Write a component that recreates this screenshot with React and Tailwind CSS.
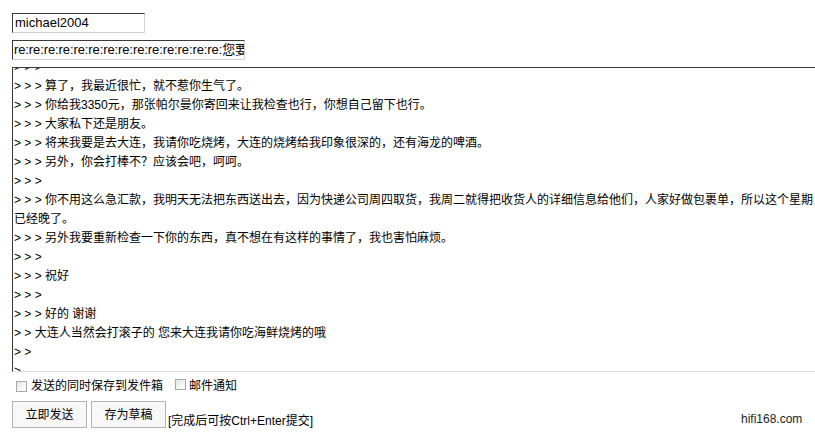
import React from 'react';

const lines = [
  '> > >',
  '> > > 算了，我最近很忙，就不惹你生气了。',
  '> > > 你给我3350元，那张帕尔曼你寄回来让我检查也行，你想自己留下也行。',
  '> > > 大家私下还是朋友。',
  '> > > 将来我要是去大连，我请你吃烧烤，大连的烧烤给我印象很深的，还有海龙的啤酒。',
  '> > > 另外，你会打棒不？应该会吧，呵呵。',
  '> > >',
  '> > > 你不用这么急汇款，我明天无法把东西送出去，因为快递公司周四取货，我周二就得把收货人的详细信息给他们，人家好做包裹单，所以这个星期',
  '已经晚了。',
  '> > > 另外我要重新检查一下你的东西，真不想在有这样的事情了，我也害怕麻烦。',
  '> > >',
  '> > > 祝好',
  '> > >',
  '> > > 好的 谢谢',
  '> > 大连人当然会打滚子的 您来大连我请你吃海鲜烧烤的哦',
  '> >',
  '>',
];

const Checkbox = () => (
  <span className="inline-block w-[11px] h-[11px] border border-[#a8a8a8] bg-gradient-to-br from-[#e6e6e6] to-white" />
);

const App = () => {
  return (
    <div
      className="relative w-[815px] h-[432px] overflow-hidden bg-white text-black text-[12px]"
      style={{ fontFamily: '"Liberation Sans", "Noto Sans CJK SC", sans-serif' }}
    >
      <div className="pt-[13px] pl-[12px] flex flex-col">
        {/* subject fields */}
        <div className="w-[133px] h-[20px] border-t border-l border-[#3a3a3a] border-r border-b border-r-[#cfcfcf] border-b-[#cfcfcf] px-[2px] text-[13px] leading-[18px] whitespace-nowrap overflow-hidden">
          michael2004
        </div>
        <div className="mt-[7px] w-[233px] h-[20px] border-t border-l border-[#3a3a3a] border-r border-b border-r-[#cfcfcf] border-b-[#cfcfcf] pl-[1px] text-[13px] tracking-[-0.1px] leading-[18px] whitespace-nowrap overflow-hidden">
          re:re:re:re:re:re:re:re:re:re:re:re:re:re:您要
        </div>

        {/* message body */}
        <div className="mt-[7px] w-[830px] h-[305px] border-t border-l border-[#3a3a3a] border-b border-b-[#dcdcdc] overflow-hidden pl-[1px]">
          <div className="-mt-[10px]">
            {lines.map((l, i) => (
              <div key={i} className="h-[19px] leading-[19px] whitespace-nowrap">
                {l}
              </div>
            ))}
          </div>
        </div>

        {/* options */}
        <div className="mt-[6px] h-[16px] flex items-center pl-[4px]">
          <Checkbox />
          <span className="ml-[4px]">发送的同时保存到发件箱</span>
          <span className="ml-[12px]"><Checkbox /></span>
          <span className="ml-[3px]">邮件通知</span>
        </div>

        {/* actions */}
        <div className="mt-[7px] flex items-end">
          <button className="w-[75px] h-[27px] border border-[#b3b3b3] bg-[#f8f8f8] text-[12px]">立即发送</button>
          <button className="ml-[4px] w-[75px] h-[27px] border border-[#b3b3b3] bg-[#f8f8f8] text-[12px]">存为草稿</button>
          <span className="ml-[2px] leading-[14px]">[完成后可按Ctrl+Enter提交]</span>
        </div>
      </div>

      {/* watermark */}
      <div className="absolute left-[741px] top-[411px] text-[12px] leading-[16px] text-[#222]">
        hifi168.com
      </div>
    </div>
  );
};

export default App;
